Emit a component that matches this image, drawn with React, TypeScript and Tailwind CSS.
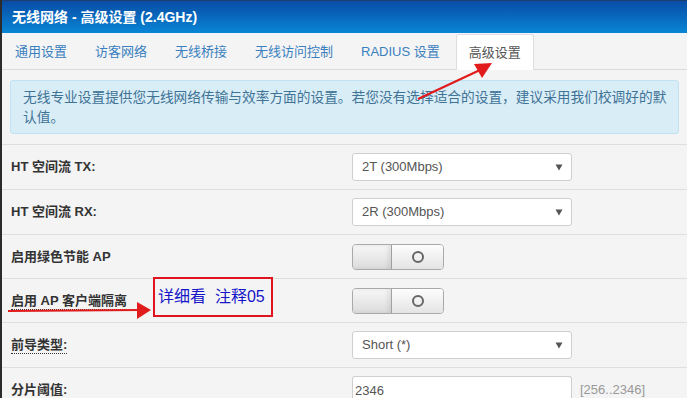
import React from "react";

const FONT = '"Liberation Sans", "Noto Sans CJK SC", sans-serif';

const tabs = ["通用设置", "访客网络", "无线桥接", "无线访问控制", "RADIUS 设置"];

function Caret() {
    return (
        <svg width="8" height="7" viewBox="0 0 8 7" className="shrink-0">
            <path d="M0.5 0.5 L7.5 0.5 L4 6.5 Z" fill="#555" />
        </svg>
    );
}

function Select({ value }: { value: string }) {
    return (
        <div className="flex h-[28px] w-[220px] items-center justify-between rounded-[3px] border border-[#cfcfcf] bg-white pl-[9px] pr-[8px] text-[13px] text-[#555]">
            <span>{value}</span>
            <Caret />
        </div>
    );
}

function Toggle() {
    return (
        <div className="flex h-[26px] w-[92px] overflow-hidden rounded-[4px] border border-[#a9a9a9]">
            <div className="w-[39px] border-r border-[#a0a0a0] bg-gradient-to-b from-[#f7f7f7] to-[#dcdcdc] shadow-[inset_-3px_0_4px_rgba(0,0,0,0.08)]" />
            <div className="flex flex-1 items-center justify-center bg-gradient-to-b from-[#fdfdfd] to-[#e4e4e4]">
                <div className="h-[12px] w-[12px] rounded-full border-2 border-[#666]" />
            </div>
        </div>
    );
}

function Row({
    label,
    dotted,
    short,
    children,
}: {
    label: string;
    dotted?: boolean;
    short?: boolean;
    children: React.ReactNode;
}) {
    return (
        <div
            className={`flex shrink-0 items-center border-t border-[#dedede] ${short ? "h-[44px]" : "h-[45px]"}`}
        >
            <div className="w-[350px] pl-[9px] text-[13px] font-bold text-[#333]">
                <span className={dotted ? "border-b border-dotted border-[#333] pb-[1px]" : ""}>
                    {label}
                </span>
            </div>
            <div className="flex items-center">{children}</div>
        </div>
    );
}

export default function App() {
    return (
        <div
            className="relative flex h-[398px] w-[687px] overflow-hidden bg-[#f4f4f4]"
            style={{ fontFamily: FONT }}
        >
            <div className="w-[2px] shrink-0 bg-[#2b2b2b]" />
            <div className="flex min-w-0 flex-1 flex-col">
                <div className="flex h-[33px] shrink-0 items-center border-t border-[#1d3f6e] bg-gradient-to-b from-[#0a4ca5] to-[#0a86d6] pl-[10px] text-[14px] font-bold text-white">
                    无线网络 - 高级设置 (2.4GHz)
                </div>
                <div className="flex h-[37px] shrink-0 items-end gap-[4px] border-b border-[#dcdcdc] pl-[1px]">
                    {tabs.map((t) => (
                        <div
                            key={t}
                            className="flex h-[35px] items-center px-[12px] text-[13px] text-[#3a80bf]"
                        >
                            {t}
                        </div>
                    ))}
                    <div className="-mb-[1px] flex h-[36px] items-center rounded-t-[3px] border border-b-0 border-[#dedede] bg-white px-[12px] text-[13px] text-[#555]">
                        高级设置
                    </div>
                </div>
                <div className="mx-[8px] mt-[10px] mb-[10px] shrink-0 rounded-[3px] border border-[#bfe3f2] bg-[#d9edf7] px-[12px] pt-[7px] pb-[5px] text-[13.7px] leading-[20px] whitespace-nowrap text-[#3f7396]">
                    无线专业设置提供您无线网络传输与效率方面的设置。若您没有选择适合的设置，建议采用我们校调好的默
                    <br />
                    认值。
                </div>
                <Row label="HT 空间流 TX:">
                    <Select value="2T (300Mbps)" />
                </Row>
                <Row label="HT 空间流 RX:">
                    <Select value="2R (300Mbps)" />
                </Row>
                <Row label="启用绿色节能 AP" short>
                    <Toggle />
                </Row>
                <Row label="启用 AP 客户端隔离" dotted short>
                    <Toggle />
                </Row>
                <Row label="前导类型:" dotted>
                    <Select value="Short (*)" />
                </Row>
                <div className="flex h-[45px] shrink-0 items-start border-t border-[#dedede] pt-[8px]">
                    <div className="w-[350px] pl-[9px] pt-[4px] text-[13px] font-bold text-[#333]">
                        <span className="border-b border-dotted border-[#333] pb-[1px]">分片阈值:</span>
                    </div>
                    <div className="flex h-[28px] w-[220px] items-center rounded-t-[3px] border border-b-0 border-[#cfcfcf] bg-white pl-[2px] text-[13px] text-[#555]">
                        2346
                    </div>
                    <div className="ml-[8px] pt-[4px] text-[13px] text-[#999]">[256..2346]</div>
                </div>
            </div>

            {/* annotation overlays */}
            <svg className="pointer-events-none absolute left-0 top-0" width="687" height="398">
                <line x1="418" y1="99" x2="480" y2="70" stroke="#e11b1b" strokeWidth="2.2" />
                <path d="M492 63 L474 64 L482 78 Z" fill="#e11b1b" />
                <line x1="8" y1="311" x2="140" y2="310" stroke="#e11b1b" strokeWidth="2" />
                <path d="M151 310 L137 302 L137 319 Z" fill="#e11b1b" />
            </svg>
            <div className="absolute left-[153px] top-[277px] flex h-[40px] w-[120px] items-center whitespace-nowrap border-2 border-[#e0141e] pl-[3px] text-[16px] text-[#1616c8]">
                详细看&nbsp;&nbsp;注释05
            </div>
        </div>
    );
}
